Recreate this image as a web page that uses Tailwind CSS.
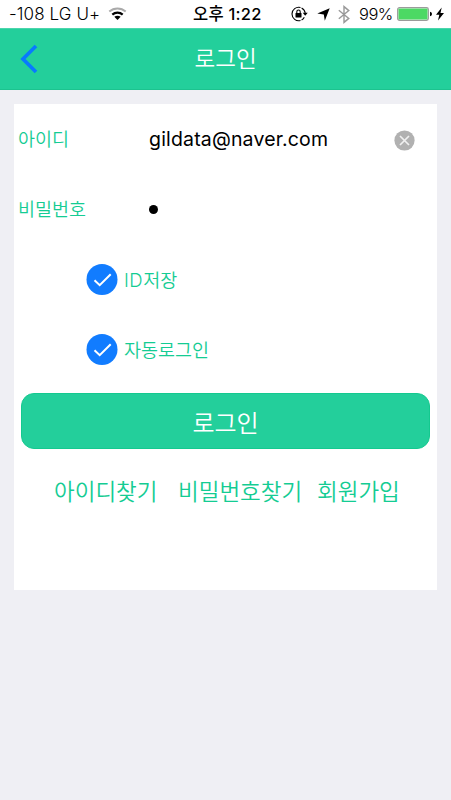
<!DOCTYPE html>
<html lang="ko">
<head>
<meta charset="utf-8">
<title>로그인</title>
<script src="https://cdn.jsdelivr.net/npm/@tailwindcss/browser@4"></script>
</head>
<body class="w-[451px] h-[800px] overflow-hidden bg-[#efeff4] font-['Inter','Noto_Sans_CJK_KR',sans-serif] whitespace-nowrap">
<div class="flex h-7 bg-white text-black items-center text-[16.5px] leading-7">
  <span class="ml-[9px] w-[91px] font-light text-[17px] tracking-[0.1px]">-108 LG U+</span>
  <svg class="ml-[8px] w-[19px] h-[14px]" viewBox="0 0 19 14" fill="none">
    <path d="M1.3 4.6C6 .4 13 .4 17.700 4.600" stroke="#aaa" stroke-width="2"/>
    <path d="M4.300 7.600C7.300 4.900 11.700 4.900 14.700 7.600" stroke="#000" stroke-width="2.200"/>
    <path d="M9.500 13 6.300 9.800Q9.500 7.500 12.700 9.800Z" fill="#000"/>
  </svg>
  <span class="ml-[66px] w-[70px] font-medium tracking-[0.25px]">오후 1:22</span>
  <svg class="ml-[28px] w-[18px] h-[16px]" viewBox="0 0 18 16" fill="none">
    <path d="M9.500 1.550A6.700 6.700 0 1 0 9.500 14.450M10.600 1.900A6.700 6.700 0 0 1 14.200 7M13.300 11.300A6.700 6.700 0 0 1 10.600 14.100" stroke="#000" stroke-width="1.100"/>
    <path d="M11.700 6.800H16.700L14.200 9.800Z" fill="#000"/>
    <rect x="4.500" y="7" width="6" height="4.500" rx=".5" fill="#000"/>
    <path d="M5.800 7.200V5.700a1.700 1.700 0 0 1 3.400 0V7.200" stroke="#000" stroke-width="1.100"/>
  </svg>
  <svg class="ml-[8px] w-[13px] h-[13px]" viewBox="0 0 13 13"><path d="M12.700.3 7.800 12.700 6.800 6.400.3 5.400Z"/></svg>
  <svg class="ml-[8px] w-[12px] h-[19px]" viewBox="0 0 12 19" fill="none" stroke="#999" stroke-width="1.400"><path d="M.8 5.200 10.800 13.400 6 17.400V1.600L10.800 5.600.8 13.800"/></svg>
  <span class="ml-[9px] w-[36px] font-light tracking-[-0.5px]">99%</span>
  <svg class="ml-[2px] w-[36px] h-[14px]" viewBox="0 0 36 14">
    <rect x=".7" y=".7" width="30.600" height="12.600" rx="1.800" fill="#fff" stroke="#9b9b9b" stroke-width="1.300"/>
    <rect x="1.500" y="1.500" width="29" height="11" rx=".8" fill="#4cd964"/>
    <path d="M33 4.800q2 .2 2 2.200t-2 2.200Z"/>
  </svg>
  <svg class="ml-[3px] w-[8px] h-[14px]" viewBox="0 0 8 14"><path d="M5.700.5 0 7.700H3.300L2 13.500 8 6H4.500Z"/></svg>
</div>
<header class="flex h-[62px] bg-[#23cf9b] border-t border-t-[#4bd5ac] border-b border-b-[#1cc38f] items-center text-white">
  <svg class="ml-[20px] w-[18px] h-[30px]" viewBox="0 0 18 30" fill="none" stroke="#087aff" stroke-width="3.700"><path d="M16 2 3 15 16 28"/></svg>
  <h1 class="ml-[156.5px] font-[350] text-[22.5px] leading-[60px]">로그인</h1>
</header>
<main class="mx-[14px] mt-[14px] w-[423px] h-[486px] bg-white text-[#14cc93] font-[350] text-[18.500px]">
  <div class="flex h-[70px] items-center">
    <label class="ml-[4px] w-[131px] pt-[2px]">아이디</label>
    <span class="w-[245px] pt-px text-black font-normal text-[19.500px] tracking-[0.17px]">gildata@naver.com</span>
    <svg class="mt-[2px] w-[21px] h-[21px]" viewBox="0 0 21 21" fill="none"><circle cx="10.500" cy="10.500" r="10.100" fill="#b1b1b1"/><path d="M6 6 15 15M15 6 6 15" stroke="#f0f0f0" stroke-width="1.700"/></svg>
  </div>
  <div class="flex h-[70px] items-center">
    <label class="ml-[4px] w-[131px] pt-[2px]">비밀번호</label>
    <span class="w-[9px] h-[9px] rounded-full bg-black"></span>
  </div>
  <div class="flex h-[70px] items-center pt-px">
    <svg class="ml-[72px] w-[32px] h-[32px]" viewBox="0 0 32 32" fill="none"><circle cx="16" cy="15.500" r="15.500" fill="#117cff"/><path d="M8.500 16.300 13.700 21.200 24.700 10.300" stroke="#fff" stroke-width="2"/></svg>
    <label class="ml-[6px] pt-[2px]"><span class="tracking-[0.5px] font-light">ID</span>저장</label>
  </div>
  <div class="flex h-[70px] items-center pt-px">
    <svg class="ml-[72px] w-[32px] h-[32px]" viewBox="0 0 32 32" fill="none"><circle cx="16" cy="15.500" r="15.500" fill="#117cff"/><path d="M8.500 16.300 13.700 21.200 24.700 10.300" stroke="#fff" stroke-width="2"/></svg>
    <label class="ml-[6px] pt-[2px]">자동로그인</label>
  </div>
  <button class="block ml-[7px] mt-[9px] w-[409px] h-[56px] rounded-[13px] bg-[#23cf9b] border border-[#14c98f] text-white text-[24px] font-[350] leading-[54px] pt-[3px]">로그인</button>
  <nav class="flex mt-[26px] ml-[40px] text-[22.500px] leading-[34px]">
    <a class="w-[124px]">아이디찾기</a>
    <a class="w-[139px]">비밀번호찾기</a>
    <a>회원가입</a>
  </nav>
</main>
</body>
</html>
